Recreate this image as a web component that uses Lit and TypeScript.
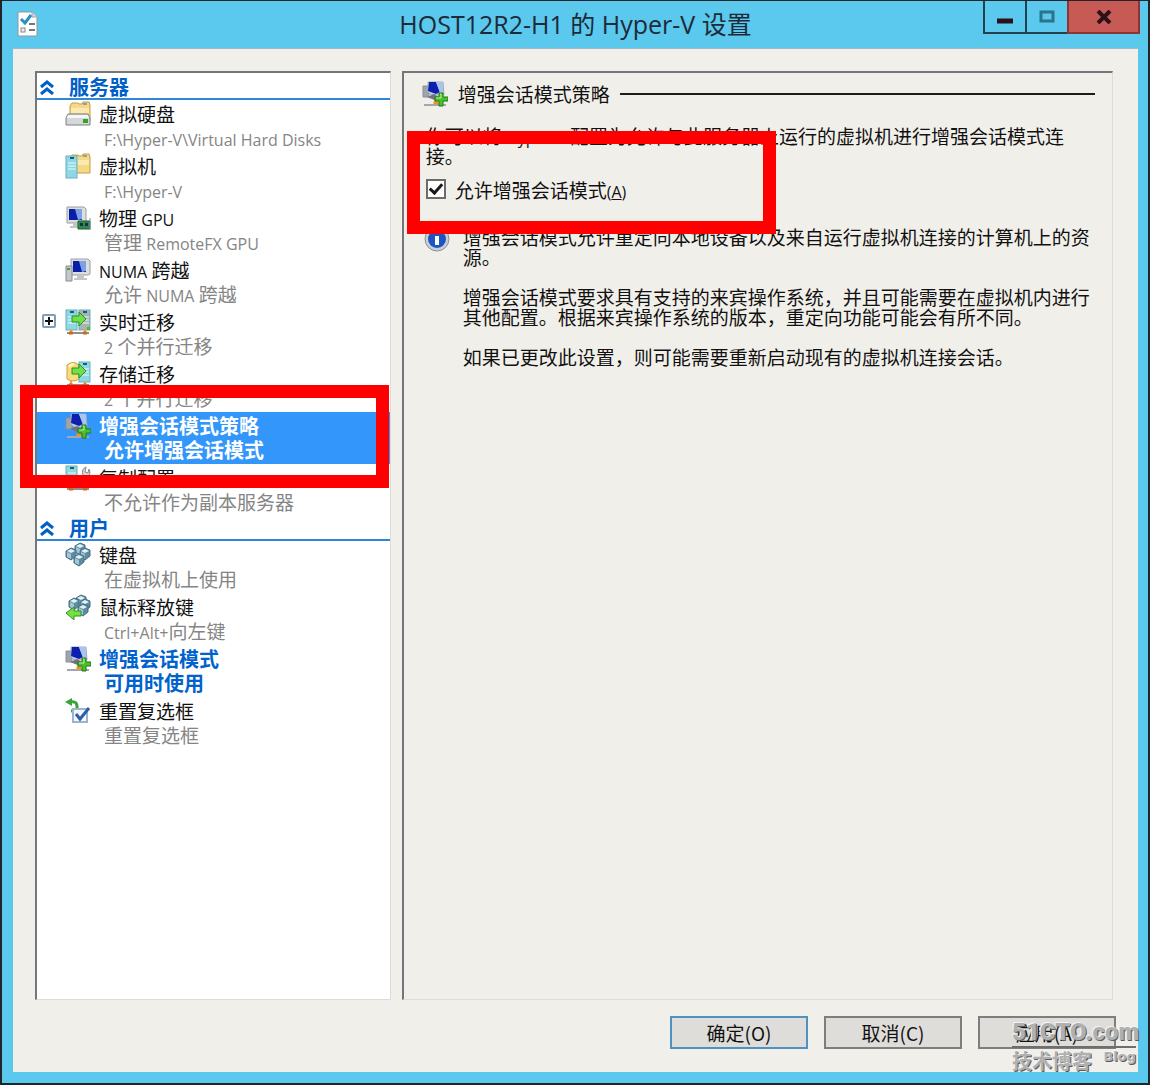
import { LitElement, html, svg, css, nothing, TemplateResult } from "lit";
import { customElement, property, state } from "lit/decorators.js";
import { classMap } from "lit/directives/class-map.js";

const monitor = (x: number, y: number) => svg`
  <path d="M${x} ${y}h17l2 2v13l-2 1H${x}z" fill="#dcdddd" stroke="#9a9fa4"/>
  <path d="M${x + 2} ${y + 2}h13v11H${x + 2}z" fill="#0a1fa8"/>
  <path d="M${x + 8} ${y + 2}h7v10l-4 1z" fill="#7d9fe6"/>
  <path d="M${x + 6} ${y + 16}h7v3h3v2H${x + 3}v-2h3z" fill="#c3c6c8"/>`;

const folder = svg`
  <path d="M5 5l2-3h6l1 1h3l1-2h6l1 3v16H5z" fill="#f6d987" stroke="#c99b3f"/>
  <path d="M6 7h18v5H6z" fill="#fbe9b0"/>
  <path d="M18 3h4" stroke="#8aa0b0" stroke-width="2"/>`;

const server = (x: number, y: number, h: number, face = "#8ed8e4") => svg`
  <rect x=${x} y=${y} width="11" height=${h} fill=${face} stroke="#6bb0bd"/>
  <path d="M${x + 4} ${y + 2}h4" stroke="#155f75" stroke-width="2"/>
  <path d="M${x + 2} ${y + 7}h8M${x + 2} ${y + 10}h8M${x + 2} ${y + 13}h8" stroke="#e5fbff"/>`;

const pipe = svg`
  <path d="M2 24h22" stroke="#8b8f92" stroke-width="2"/>
  <path d="M6 20v4M20 20v4" stroke="#e0a070" stroke-width="2"/>
  <path d="M4 24h4M18 24h4" stroke="#d5690d" stroke-width="3"/>`;

const arrowRight = svg`
  <path d="M7 7h7V3l7 7-7 7v-4H7z" fill="#6fe04a" stroke="#2b9120"/>`;

const cube = (x: number, y: number) => svg`
  <path d="M${x} ${y + 3}l5-3 5 2v6l-5 4-5-3z" fill="#5f8ba0" stroke="#456f84"/>
  <path d="M${x + 1} ${y + 3}l4-2 4 2-4 2z" fill="#e2f1f6"/>
  <path d="M${x + 1} ${y + 4}l4 2v5l-4-2z" fill="#a3c6d4"/>`;

const enhanced = svg`
  <path d="M1 5h6v11H1z" fill="#9ea4ad" stroke="#8a9098"/>
  <path d="M6 1h15l1 13H9L6 11z" fill="#c3ccd8" stroke="#a3abb6"/>
  <path d="M7 1h7l4 10-4 2-8-3z" fill="#0c20b0"/>
  <path d="M14 1h7v10l-3 1z" fill="#a9c5ee"/>
  <path d="M5 16l7-3 6 4-3 3z" fill="#6d7480"/>
  <path d="M2 24h22" stroke="#a5a7aa" stroke-width="2"/>
  <path d="M11 22l3-5 3 6h-5z" fill="#f2941b"/>
  <path d="M17 12h4v4h5v4h-5v5h-4v-5h-4v-4h4z" fill="#4cc02c" stroke="#1f7b14"/>
  <path d="M18 13h1v4h-5" stroke="#b7f29b" fill="none"/>`;

const ICONS: Record<string, TemplateResult<2>> = {
  disk: svg`${folder}
    <path d="M3 13h20l2 4v7H1v-7z" fill="#d5d7da" stroke="#7c8084"/>
    <path d="M3 14h20l1 3H2z" fill="#f5f6f7"/>
    <rect x="18" y="18" width="5" height="4" fill="#2fa81d"/>`,
  vm: svg`${folder}${server(1, 3, 22)}`,
  gpu: svg`${monitor(2, 2)}
    <path d="M13 16h12v8H13z" fill="#2d8c4a" stroke="#1b5b34"/>
    <path d="M15 18h3v3h-3zM20 18h3v3h-3z" fill="#16304a"/>
    <path d="M25 13v12" stroke="#8b8f92"/>`,
  numa: svg`${monitor(6, 2)}
    <path d="M1 9h6v15H1z" fill="#c3c7cb" stroke="#868c92"/>
    <path d="M2 12h3" stroke="#3ca52d" stroke-width="2"/>`,
  live: svg`${server(1, 1, 20)}${server(14, 1, 20, "#a9b2b4")}${arrowRight}
    <path d="M22 18h3v3h-3z" fill="#46c321"/>${pipe}`,
  storage: svg`
    <path d="M2 4q6-5 12 0v14q-6 4-12 0z" fill="#f8dd7e" stroke="#cf9d34"/>
    <path d="M4 6q2-3 5-3" stroke="#fff6d0" stroke-width="2" fill="none"/>
    ${server(14, 1, 20)}${arrowRight}${pipe}`,
  enhanced,
  replica: svg`${server(1, 1, 20)}
    <path d="M13 20L18 10q-2-6 3-8l-1 5 3 1 1-4q3 6-3 8l-5 9z" fill="#d9dcde" stroke="#85898c"/>${pipe}`,
  keyboard: svg`${cube(10, 1)}${cube(1, 6)}${cube(15, 6)}${cube(9, 12)}`,
  mouse: svg`${cube(11, 1)}${cube(4, 4)}${cube(15, 5)}${cube(13, 10)}
    <path d="M1 19l8-6v4h7v5H9v4z" fill="#74e046" stroke="#2e941c"/>`,
  reset: svg`
    <path d="M5 4q8-2 7 7-2 2-6 2" fill="none" stroke="#3aa33a" stroke-width="3"/>
    <path d="M0 4l7-4v8z" fill="#3aa33a"/>
    <rect x="8" y="11" width="14" height="13" fill="#f4f8fd" stroke="#9fb3d0" stroke-width="2"/>
    <path d="M11 16l4 5 9-11" fill="none" stroke="#2c5ea8" stroke-width="3"/>`,
  app: svg`
    <path d="M4 1h14l5 5v19H4z" fill="#fff" stroke="#8f979c"/>
    <path d="M18 1v5h5" fill="#d7dbde" stroke="#9da4a8"/>
    <path d="M7 8l4 4 6-8" fill="none" stroke="#2a8fc4" stroke-width="3"/>
    <path d="M15 13h6M15 19h6" stroke="#777" stroke-width="2"/>
    <rect x="7" y="17" width="4" height="4" fill="#eee" stroke="#888"/>`,
  info: svg`
    <circle cx="13" cy="13" r="12" fill="#c9ced4" stroke="#8d9298"/>
    <circle cx="13" cy="13" r="9" fill="#1b55c4"/>
    <path d="M13 6v2M13 10v9" stroke="#fff" stroke-width="4"/>`,
};

const icon = (name: string) => html`
  <svg class="icon" viewBox="0 0 26 26" width="26" height="26" aria-hidden="true">${ICONS[name]}</svg>`;

const mixed = (text: string) =>
  text
    .split(/([\x21-\x7e]+(?: [\x21-\x7e]+)*)/)
    .map((part, i) => (i % 2 ? html`<span class="latin">${part}</span>` : part));

const latin = css`
  .latin { font: 16px/16px "Open Sans", sans-serif; }
`;

interface Entry {
  id: string;
  icon: string;
  title: string;
  detail: string;
  expandable?: boolean;
  changed?: boolean;
}

const GROUPS: { name: string; entries: Entry[] }[] = [
  {
    name: "服务器",
    entries: [
      { id: "disk", icon: "disk", title: "虚拟硬盘", detail: "F:\\Hyper-V\\Virtual Hard Disks" },
      { id: "vm", icon: "vm", title: "虚拟机", detail: "F:\\Hyper-V" },
      { id: "gpu", icon: "gpu", title: "物理 GPU", detail: "管理 RemoteFX GPU" },
      { id: "numa", icon: "numa", title: "NUMA 跨越", detail: "允许 NUMA 跨越" },
      { id: "live", icon: "live", title: "实时迁移", detail: "2 个并行迁移", expandable: true },
      { id: "storage", icon: "storage", title: "存储迁移", detail: "2 个并行迁移" },
      { id: "policy", icon: "enhanced", title: "增强会话模式策略", detail: "允许增强会话模式" },
      { id: "replica", icon: "replica", title: "复制配置", detail: "不允许作为副本服务器" },
    ],
  },
  {
    name: "用户",
    entries: [
      { id: "keyboard", icon: "keyboard", title: "键盘", detail: "在虚拟机上使用" },
      { id: "mouse", icon: "mouse", title: "鼠标释放键", detail: "Ctrl+Alt+向左键" },
      { id: "mode", icon: "enhanced", title: "增强会话模式", detail: "可用时使用", changed: true },
      { id: "reset", icon: "reset", title: "重置复选框", detail: "重置复选框" },
    ],
  },
];

@customElement("settings-nav")
class SettingsNav extends LitElement {
  @property() selected = "policy";

  static styles = [latin, css`
    :host { display: block; padding-top: 2px; }
    button { font: inherit; color: inherit; background: none; border: 0; padding: 0; margin: 0; text-align: left; }
    ul { list-style: none; margin: 0; padding: 0; }
    .group {
      display: flex; align-items: center; width: 100%; height: 25px;
      border-bottom: 2px solid #2f86d6; color: #0060c8;
      font-size: 20px; font-weight: 700; line-height: 23px;
    }
    .chevron { width: 14px; height: 16px; margin: 0 15px 0 3px; }
    .entry { position: relative; display: flex; height: 52px; }
    .gutter { width: 28px; padding: 6px 0 0 5px; box-sizing: border-box; flex: none; }
    .expand { display: block; width: 14px; height: 14px; }
    .expand svg { display: block; }
    .pick { display: flex; flex: 1; gap: 8px; align-items: flex-start; }
    .icon { margin-top: 1px; flex: none; }
    .title { display: block; line-height: 28px; }
    .detail { display: block; line-height: 20px; padding-left: 5px; color: #858585; }
    .changed, .selected { font-size: 20px; font-weight: 700; }
    .changed, .changed .detail { color: #0062cc; }
    .selected { background: #3296fa; }
    .selected, .selected .detail { color: #fff; }
    .mark {
      position: absolute; z-index: 1; top: -27px; bottom: -24px; left: -17px; right: 1px;
      border: 13px solid #ff0000; pointer-events: none;
    }
  `];

  private pick(id: string) {
    this.dispatchEvent(new CustomEvent("pick", { detail: id }));
  }

  private entry(e: Entry) {
    const on = e.id === this.selected;
    return html`
      <li class=${classMap({ entry: true, selected: on, changed: !!e.changed && !on })}>
        <div class="gutter">
          ${e.expandable
            ? html`<button class="expand" aria-label="展开">
                <svg viewBox="0 0 14 14" width="14" height="14">
                  <rect x="1" y="1" width="12" height="12" rx="1" fill="#fff" stroke="#7f9cb8" stroke-width="2"/>
                  <path d="M7 3v8M3 7h8" stroke="#111" stroke-width="2"/>
                </svg>
              </button>`
            : nothing}
        </div>
        <button class="pick" aria-current=${on ? "true" : "false"} @click=${() => this.pick(e.id)}>
          ${icon(e.icon)}
          <span>
            <span class="title">${mixed(e.title)}</span>
            <span class="detail">${mixed(e.detail)}</span>
          </span>
        </button>
        ${e.id === "policy" ? html`<span class="mark"></span>` : nothing}
      </li>`;
  }

  render() {
    return GROUPS.map(
      (g) => html`
        <button class="group" aria-expanded="true">
          <svg class="chevron" viewBox="0 0 14 16" aria-hidden="true">
            <path d="M1 8l6-5 6 5M1 15l6-5 6 5" fill="none" stroke="#0060c8" stroke-width="3"/>
          </svg>
          ${g.name}
        </button>
        <ul>${g.entries.map((e) => this.entry(e))}</ul>`
    );
  }
}

@customElement("policy-page")
class PolicyPage extends LitElement {
  static styles = [latin, css`
    :host { display: block; padding: 7px 17px 16px 18px; }
    header { display: flex; align-items: center; gap: 10px; height: 28px; }
    h2 { margin: 0; padding-bottom: 2px; font-size: 19px; font-weight: 400; }
    hr { flex: 1; margin: 0; border: 0; border-top: 2px solid #1c1c1c; }
    p { margin: 0; line-height: 20px; }
    .intro { padding: 18px 18px 0 4px; }
    .option { position: relative; display: flex; align-items: center; gap: 9px; padding: 9px 0 0 4px; height: 28px; }
    .option input {
      appearance: none; width: 20px; height: 20px; margin: 0; border: 2px solid #6c6c6c;
      background: #fff; display: grid; place-items: center;
    }
    .option input:checked::after {
      content: ""; width: 5px; height: 10px; margin-bottom: 3px;
      border: solid #1a1a1a; border-width: 0 3px 3px 0; transform: rotate(42deg);
    }
    .mark {
      position: absolute; z-index: 1; top: -35px; left: -15px; width: 369px; height: 103px;
      box-sizing: border-box; border: 13px solid #ff0000; pointer-events: none;
    }
    .note { display: flex; gap: 13px; margin-top: 24px; padding-left: 2px; }
    .note .icon { flex: none; margin-top: -1px; }
    .text { display: flex; flex-direction: column; gap: 20px; }
  `];

  render() {
    return html`
      <header>${icon("enhanced")}<h2>增强会话模式策略</h2><hr /></header>
      <p class="intro">${mixed("你可以将 Hyper-V 配置为允许与此服务器上运行的虚拟机进行增强会话模式连接。")}</p>
      <div class="option">
        <input type="checkbox" id="allow" checked />
        <label for="allow">允许增强会话模式<span class="latin">(<u>A</u>)</span></label>
        <span class="mark"></span>
      </div>
      <div class="note">
        ${icon("info")}
        <div class="text">
          <p>增强会话模式允许重定向本地设备以及来自运行虚拟机连接的计算机上的资源。</p>
          <p>增强会话模式要求具有支持的来宾操作系统，并且可能需要在虚拟机内进行其他配置。根据来宾操作系统的版本，重定向功能可能会有所不同。</p>
          <p>如果已更改此设置，则可能需要重新启动现有的虚拟机连接会话。</p>
        </div>
      </div>`;
  }
}

@customElement("app-root")
class AppRoot extends LitElement {
  @state() private selected = "policy";

  static styles = css`
    :host {
      display: flex; flex-direction: column; box-sizing: border-box; min-height: 100vh;
      padding: 0 10px 11px 11px; border: 2px solid #20252a; border-top-width: 1px;
      background: #5bc8ee; color: #111;
      font: 19px "Noto Sans CJK SC", sans-serif;
    }
    .titlebar { display: flex; height: 47px; align-items: flex-start; }
    .titlebar .icon { margin: 10px 0 0 1px; }
    h1 {
      flex: 1; margin: 0; padding-left: 128px; text-align: center; color: #1c2b38;
      font: 25px/46px "Open Sans", "Noto Sans CJK SC", sans-serif;
    }
    .controls { display: flex; height: 33px; margin-right: -2px; }
    .controls button {
      width: 42px; padding: 0; border: 2px solid #24414f; border-width: 0 0 2px 2px;
      background: transparent; display: grid; place-items: center;
    }
    .controls .close { width: 73px; background: #c75a55; border: 2px solid #8c3634; border-top: 0; }
    .client {
      flex: 1; display: flex; flex-direction: column; gap: 16px;
      padding: 22px 25px 23px 22px; background: #f1efea; border-top: 1px solid #a3b9c6;
    }
    .panes { flex: 1; display: grid; grid-template-columns: minmax(0, 1fr) minmax(0, 2fr); gap: 11px; }
    .pane { border: 2px solid #74777a; border-right-color: #dedcd8; border-bottom-color: #dedcd8; border-right-width: 1px; border-bottom-width: 1px; }
    .nav { background: #fff; }
    .actions { display: flex; justify-content: flex-end; gap: 16px; position: relative; margin-right: -3px; }
    .actions button {
      width: 138px; height: 33px; padding: 0; border: 2px solid #7e7e7e;
      background: #dfddda; font: inherit; color: #111; line-height: 28px;
    }
    .actions .primary { border-color: #4f92bf; }
    .watermark {
      position: absolute; top: 2px; right: -20px; width: 124px; color: #b0b0b0;
      text-shadow: -1px -1px 0 #f4f4f4, 1px 1px 0 #5c5c5c; font-weight: 700; pointer-events: none;
    }
    .site {
      display: block; border-bottom: 2px solid #6e6e6e; white-space: nowrap;
      font: 900 24px/28px Roboto, sans-serif;
    }
    .tag { display: flex; justify-content: space-between; font-size: 20px; line-height: 26px; }
    .tag small { font: 700 13px/18px "DejaVu Sans", sans-serif; }
  `;

  render() {
    return html`
      <div class="titlebar">
        ${icon("app")}
        <h1>HOST12R2-H1 的 Hyper-V 设置</h1>
        <div class="controls">
          <button aria-label="最小化">
            <svg width="16" height="16" viewBox="0 0 16 16"><path d="M0 12h16" stroke="#2b1118" stroke-width="5"/></svg>
          </button>
          <button aria-label="最大化">
            <svg width="16" height="14" viewBox="0 0 16 14"><path d="M2 2h12v9H2z" fill="none" stroke="#2a7389" stroke-width="3"/></svg>
          </button>
          <button class="close" aria-label="关闭">
            <svg width="16" height="14" viewBox="0 0 16 14"><path d="M2 1l12 12M14 1L2 13" stroke="#2b1118" stroke-width="4"/></svg>
          </button>
        </div>
      </div>
      <main class="client">
        <div class="panes">
          <settings-nav class="pane nav" .selected=${this.selected}
            @pick=${(e: CustomEvent<string>) => (this.selected = e.detail)}></settings-nav>
          <policy-page class="pane"></policy-page>
        </div>
        <div class="actions">
          <button class="primary">确定(O)</button>
          <button>取消(C)</button>
          <button>应用(A)</button>
          <div class="watermark">
            <span class="site">51CTO.com</span>
            <span class="tag">技术博客<small>Blog</small></span>
          </div>
        </div>
      </main>`;
  }
}
